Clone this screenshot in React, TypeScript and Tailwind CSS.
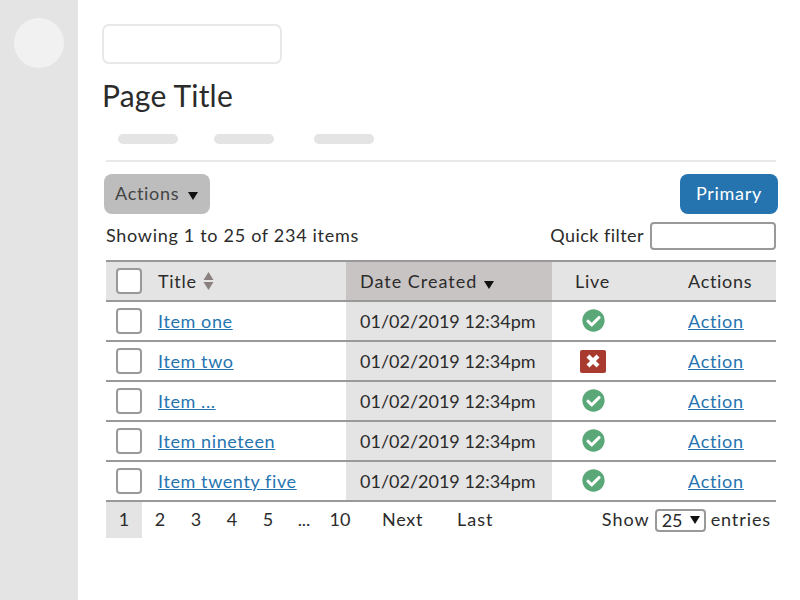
import { FaCheckCircle } from "react-icons/fa";

const rows = [
  { title: "Item one", live: true },
  { title: "Item two", live: false },
  { title: "Item ...", live: true },
  { title: "Item nineteen", live: true },
  { title: "Item twenty five", live: true },
];

const pages = ["2", "3", "4", "5"];

function Caret({ className }: { className?: string }) {
  return (
    <svg viewBox="0 0 10 8" className={className}>
      <path d="M0 0H10L5 8Z" fill="currentColor" />
    </svg>
  );
}

function Checkbox() {
  return <div className="h-[26px] w-[26px] rounded-[4px] border-2 border-[#999] bg-white" />;
}

function Cross() {
  return (
    <svg viewBox="0 0 26 23" className="h-[23px] w-[26px]">
      <rect width="26" height="23" rx="2" fill="#a93a30" />
      <path d="M8 6L18 16M18 6L8 16" stroke="#fff" strokeWidth="4.2" />
    </svg>
  );
}

export default function App() {
  return (
    <div className="flex h-[600px] w-[800px] overflow-hidden bg-white font-['Lato',sans-serif] text-[18px] tracking-[0.7px] text-[#2b2b2b]">

      {/* Sidebar */}
      <div className="w-[78px] shrink-0 bg-[#e4e4e4] pl-[14px] pt-[18px]">
        <div className="h-[50px] w-[50px] rounded-full bg-[#f1f1f1]" />
      </div>

      {/* Content */}
      <div className="w-[700px] pl-[24px] pt-[24px]">

        <div className="h-[40px] w-[180px] rounded-[7px] border-2 border-[#e8e8e8]" />

        <h1 className="mt-[12px] h-[40px] text-[30px] leading-[38px] tracking-[0.2px]">Page Title</h1>

        <div className="mt-[18px] flex pl-[16px]">
          <div className="h-[10px] w-[60px] rounded-full bg-[#e4e4e4]" />
          <div className="ml-[36px] h-[10px] w-[60px] rounded-full bg-[#e4e4e4]" />
          <div className="ml-[40px] h-[10px] w-[60px] rounded-full bg-[#e4e4e4]" />
        </div>

        <div className="ml-[4px] mt-[16px] h-[2px] w-[670px] bg-[#e8e8e8]" />

        <div className="ml-[2px] mt-[12px] flex w-[674px] items-center justify-between">
          <div className="flex h-[40px] w-[106px] items-center rounded-[8px] bg-[#bdbdbd] pb-[2px] pl-[11px] text-[#444]">
            Actions
            <Caret className="ml-[9px] mt-[6px] h-[8px] w-[10px] text-[#111]" />
          </div>
          <div className="flex h-[40px] w-[98px] items-center justify-center rounded-[8px] bg-[#2574b0] pb-[2px] text-white">
            Primary
          </div>
        </div>

        <div className="ml-[4px] mt-[8px] flex h-[28px] w-[670px] items-center justify-between">
          <span className="pb-[2px]">Showing 1 to 25 of 234 items</span>
          <div className="flex items-center gap-[6px]">
            <span className="pb-[2px] tracking-[0.45px]">Quick filter</span>
            <div className="h-[28px] w-[126px] rounded-[4px] border-2 border-[#999]" />
          </div>
        </div>

        {/* Table */}
        <div className="ml-[4px] mt-[10px] w-[670px] border-t-2 border-[#999]">
          <div className="grid h-[40px] grid-cols-[240px_206px_82px_142px] border-b-2 border-[#999] bg-[#e4e4e4]">
            <div className="flex items-center pl-[10px]">
              <Checkbox />
              <span className="ml-[16px]">Title</span>
              <svg viewBox="0 0 10 18" className="ml-[6px] h-[18px] w-[11px] text-[#8a8080]">
                <path d="M5 0L10 8H0ZM0 10H10L5 18Z" fill="currentColor" />
              </svg>
            </div>
            <div className="flex items-center bg-[#c8c4c4] pl-[14px] tracking-[1px]">
              Date Created
              <Caret className="ml-[7px] mt-[8px] h-[8px] w-[10px] text-[#111]" />
            </div>
            <div className="flex items-center pl-[23px]">Live</div>
            <div className="flex items-center pl-[54px]">Actions</div>
          </div>

          {rows.map((row) => (
            <div key={row.title} className="grid h-[40px] grid-cols-[240px_206px_82px_142px] border-b-2 border-[#999]">
              <div className="flex items-center pl-[10px]">
                <Checkbox />
                <a className="ml-[16px] tracking-[0.6px] text-[#2574b0] underline">{row.title}</a>
              </div>
              <div className="flex items-center bg-[#e4e4e4] pl-[14px] tracking-normal">01/02/2019 12:34pm</div>
              <div className="flex items-center pl-[28px]">
                {row.live ? (
                  <FaCheckCircle className="ml-[2px] mb-[2px] h-[23px] w-[23px] text-[#5aa878]" />
                ) : (
                  <Cross />
                )}
              </div>
              <div className="flex items-center pl-[54px]">
                <a className="text-[#2574b0] underline">Action</a>
              </div>
            </div>
          ))}

          {/* Pagination */}
          <div className="flex h-[36px] items-center">
            <div className="flex h-[36px] w-[36px] items-center justify-center bg-[#e4e4e4] pb-[2px] tracking-normal">1</div>
            {pages.map((p) => (
              <div key={p} className="flex w-[36px] justify-center pb-[2px] tracking-normal">{p}</div>
            ))}
            <div className="flex w-[36px] justify-center pb-[2px] tracking-normal">...</div>
            <div className="flex w-[36px] justify-center pb-[2px] tracking-normal">10</div>
            <span className="ml-[24px] pb-[2px]">Next</span>
            <span className="ml-[34px] pb-[2px] tracking-[1px]">Last</span>
            <div className="ml-auto flex items-center pr-[5px]">
              <span className="pb-[2px] tracking-[1px]">Show</span>
              <div className="ml-[5px] flex h-[23px] w-[51px] items-center rounded-[4px] border-2 border-[#999] pl-[5px] tracking-normal">
                25
                <Caret className="ml-[7px] h-[8px] w-[10px] text-[#111]" />
              </div>
              <span className="ml-[5px] pb-[2px] tracking-[0.9px]">entries</span>
            </div>
          </div>
        </div>

      </div>
    </div>
  );
}
